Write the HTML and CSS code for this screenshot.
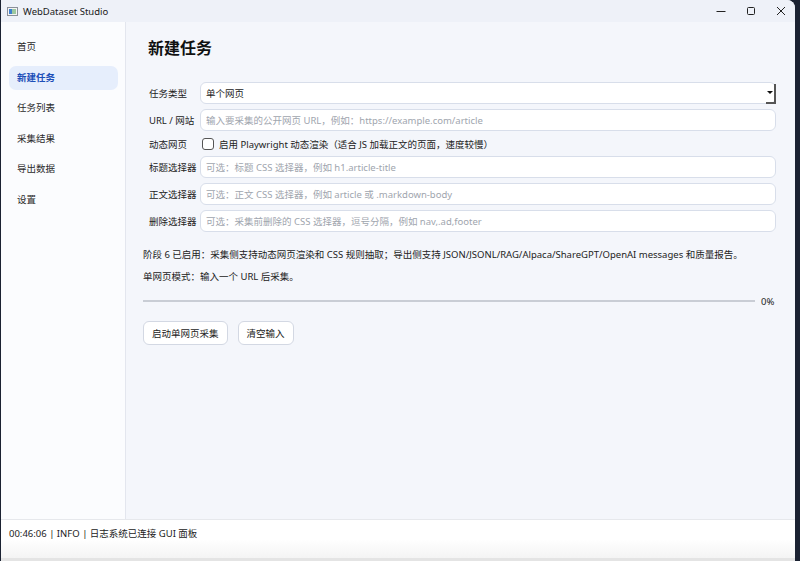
FILE: index.html
```html
<!DOCTYPE html>
<html lang="zh-CN">
<head>
    <meta charset="UTF-8">
    <meta name="viewport" content="width=device-width, initial-scale=1.0">
    <title>WebDataset Studio</title>
    <link rel="stylesheet" href="styles.css">
</head>
<body>
    <div class="window">
        <!-- Title bar -->
        <div class="titlebar">
            <svg class="app-icon" width="11" height="9" viewBox="0 0 11 9">
                <rect x="0.5" y="0.5" width="10" height="8" fill="#f4f4f4" stroke="#8a8f99"/>
                <rect x="2" y="2" width="3" height="5" fill="#3f7fcf"/>
                <rect x="5" y="2" width="4" height="5" fill="#9cc8a0"/>
            </svg>
            <span class="app-title">WebDataset Studio</span>
            <div class="win-controls">
                <svg width="10" height="10" viewBox="0 0 10 10"><path d="M0.5 5.5h9" stroke="#222" stroke-width="1"/></svg>
                <svg width="10" height="10" viewBox="0 0 10 10"><rect x="1.5" y="1.5" width="7" height="7" rx="1" fill="none" stroke="#222" stroke-width="1"/></svg>
                <svg width="10" height="10" viewBox="0 0 10 10"><path d="M1 1l8 8M9 1l-8 8" stroke="#222" stroke-width="1"/></svg>
            </div>
        </div>

        <div class="main">
            <!-- Sidebar -->
            <nav class="sidebar">
                <a href="#" class="nav-item">首页</a>
                <a href="#" class="nav-item active">新建任务</a>
                <a href="#" class="nav-item">任务列表</a>
                <a href="#" class="nav-item">采集结果</a>
                <a href="#" class="nav-item">导出数据</a>
                <a href="#" class="nav-item">设置</a>
            </nav>

            <!-- New task page -->
            <div class="content">
                <h1>新建任务</h1>
                <div class="form-grid">
                    <label>任务类型</label>
                    <div class="select">
                        <span class="select-text">单个网页</span>
                        <span class="drop-btn"><span class="arrow"></span></span>
                    </div>

                    <label>URL / 网站</label>
                    <input type="text" placeholder="输入要采集的公开网页 URL，例如：https://example.com/article">

                    <label>动态网页</label>
                    <div class="check-row">
                        <span class="checkbox"></span>
                        <span>启用 Playwright 动态渲染（适合 JS 加载正文的页面，速度较慢）</span>
                    </div>

                    <label>标题选择器</label>
                    <input type="text" placeholder="可选：标题 CSS 选择器，例如 h1.article-title">

                    <label>正文选择器</label>
                    <input type="text" placeholder="可选：正文 CSS 选择器，例如 article 或 .markdown-body">

                    <label>删除选择器</label>
                    <input type="text" placeholder="可选：采集前删除的 CSS 选择器，逗号分隔，例如 nav,.ad,footer">
                </div>

                <p class="info">阶段 6 已启用：采集侧支持动态网页渲染和 CSS 规则抽取；导出侧支持 JSON/JSONL/RAG/Alpaca/ShareGPT/OpenAI messages 和质量报告。</p>
                <p class="info mode">单网页模式：输入一个 URL 后采集。</p>

                <div class="progress-row">
                    <div class="progress-track"></div>
                    <span class="progress-label">0%</span>
                </div>

                <div class="actions">
                    <button>启动单网页采集</button>
                    <button>清空输入</button>
                </div>
            </div>
        </div>

        <!-- Log status bar -->
        <div class="statusbar">00:46:06 | INFO | 日志系统已连接 GUI 面板</div>
    </div>
</body>
</html>
```

FILE: styles.css
```css
body {
    margin: 0;
    background-color: #1b2232;
    font-family: "Noto Sans", "Noto Sans CJK SC", sans-serif;
    font-size: 9.5px;
    color: #222;
    height: 561px;
    overflow: hidden;
}
.window {
    width: 794px;
    height: 558px;
    margin-left: 1px;
    background-color: #f4f6fb;
    border-radius: 0 8px 0 0;
    overflow: hidden;
    display: flex;
    flex-direction: column;
    border-bottom: 3px solid #e4e4e4;
}
.titlebar {
    height: 22px;
    flex-shrink: 0;
    background-color: #eef1f8;
    display: flex;
    align-items: center;
    padding-left: 6px;
}
.app-icon {
    margin-right: 5px;
}
.app-title {
    font-family: "Noto Sans", sans-serif;
    font-size: 9.5px;
    color: #1a1a1a;
}
.win-controls {
    margin-left: auto;
    display: flex;
    gap: 20px;
    padding-right: 9px;
}
.main {
    flex: 1;
    display: flex;
    min-height: 0;
}
.sidebar {
    width: 125px;
    flex-shrink: 0;
    background-color: #fbfcfe;
    border-right: 1px solid #e3e6ee;
    padding: 13px 7px 0 8px;
    box-sizing: border-box;
    display: flex;
    flex-direction: column;
    gap: 6.6px;
}
.nav-item {
    display: block;
    height: 24px;
    line-height: 24px;
    padding-left: 8px;
    border-radius: 7px;
    color: #2a2a2a;
    text-decoration: none;
}
.nav-item.active {
    background-color: #e6eefc;
    color: #1d4fb8;
    font-weight: bold;
}
.content {
    flex: 1;
    padding: 14px 19px 0 18px;
    box-sizing: border-box;
}
h1 {
    margin: 0 0 22px 4px;
    font-size: 16px;
    line-height: 24px;
    color: #111;
}
.form-grid {
    display: grid;
    grid-template-columns: 51px 1fr;
    row-gap: 5px;
    align-items: center;
    padding-left: 5px;
}
label {
    color: #222;
    white-space: nowrap;
}
input, .select {
    height: 22px;
    box-sizing: border-box;
    border: 1px solid #d8deea;
    border-radius: 6px;
    background-color: #fff;
    font-family: inherit;
    font-size: 9.5px;
    padding: 0 5px;
    color: #222;
    outline: none;
}
input::placeholder {
    color: #a0a5ae;
}
.select {
    display: flex;
    align-items: center;
    padding-right: 0;
}
.select-text {
    flex: 1;
}
.drop-btn {
    width: 10px;
    height: 20px;
    border-right: 2px solid #555;
    border-bottom: 2px solid #555;
    box-sizing: border-box;
    display: flex;
    align-items: center;
    justify-content: center;
    margin-right: -1px;
    margin-top: 1px;
}
.arrow {
    width: 0;
    height: 0;
    border-left: 3px solid transparent;
    border-right: 3px solid transparent;
    border-top: 3px solid #111;
}
.check-row {
    height: 15px;
    display: flex;
    align-items: center;
    gap: 5px;
    padding-left: 2px;
}
.checkbox {
    width: 12px;
    height: 12px;
    box-sizing: border-box;
    border: 1px solid #555;
    border-radius: 3px;
    background-color: #fff;
}
.info {
    margin: 15px 0 0 -1px;
    line-height: 16px;
}
.info.mode {
    margin-top: 6px;
}
.progress-row {
    display: flex;
    align-items: center;
    gap: 6px;
    margin: 8px 0 0 -1px;
    height: 16px;
}
.progress-track {
    flex: 1;
    height: 2px;
    background-color: #c9cdd5;
}
.progress-label {
    width: 14px;
    margin-right: 1px;
}
.actions {
    display: flex;
    gap: 10px;
    margin: 12px 0 0 -1px;
}
button {
    height: 24px;
    padding: 0 8px;
    border: 1px solid #d3d8e3;
    border-radius: 6px;
    background-color: #fff;
    font-family: inherit;
    font-size: 9.5px;
    color: #222;
}
.statusbar {
    height: 38px;
    flex-shrink: 0;
    border-top: 1px solid #e6e8ec;
    background: linear-gradient(#fff 50%, #f4f4f4);
    padding-left: 8px;
    line-height: 28px;
}
```
